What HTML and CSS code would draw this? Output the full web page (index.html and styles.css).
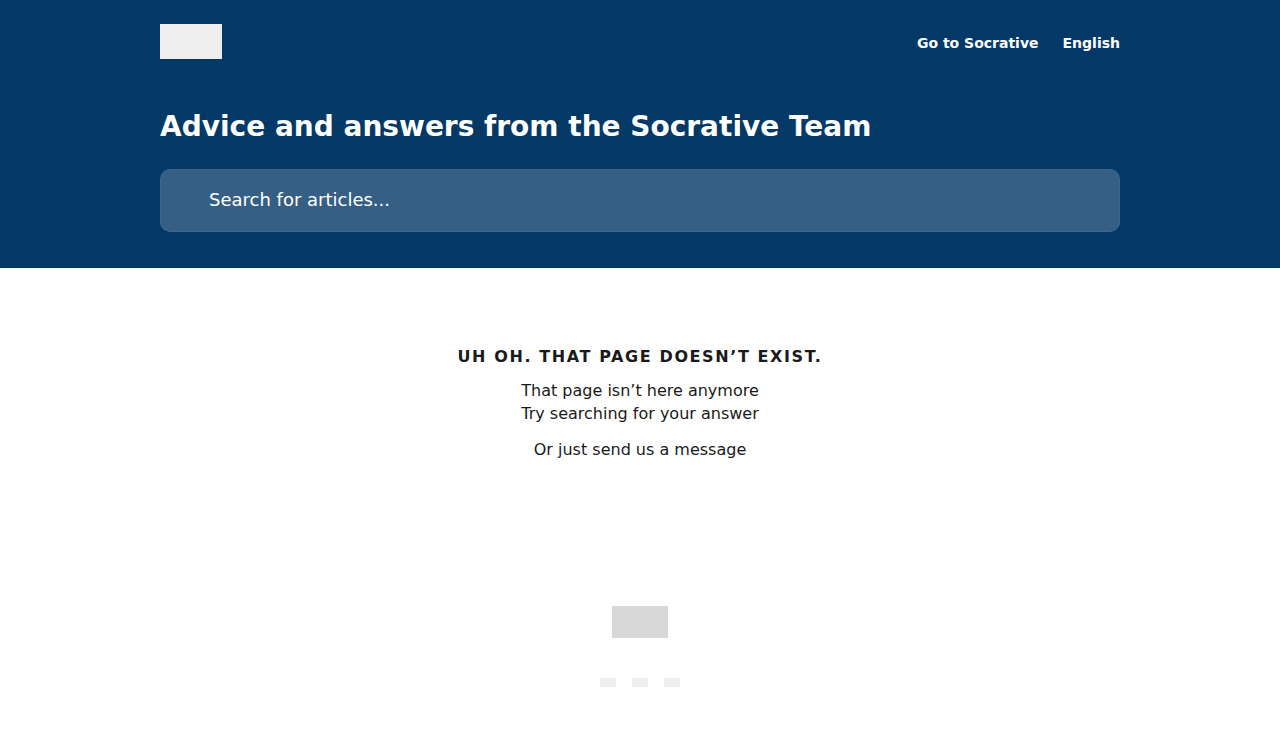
FILE: index.html
```html
<!DOCTYPE html>
<html>
<head>
<meta charset="utf-8">
<link rel="stylesheet" href="styles.css">
</head>
<body>
<header class="header">
  <div class="container">
    <div class="topbar">
      <div class="logo"></div>
      <nav class="nav">
        <a href="#">Go to Socrative</a>
        <a href="#">English</a>
      </nav>
    </div>
    <h1 class="title">Advice and answers from the Socrative Team</h1>
    <div class="search">Search for articles...</div>
  </div>
</header>
<main class="main">
  <h2 class="err-title">UH OH. THAT PAGE DOESN’T EXIST.</h2>
  <p class="lines">That page isn’t here anymore<br>Try searching for your answer</p>
  <p class="msg">Or just send us a message</p>
</main>
<footer class="footer">
  <div class="flogo"></div>
  <div class="socials">
    <span></span><span></span><span></span>
  </div>
</footer>
</body>
</html>
```
FILE: styles.css
```css
* { box-sizing: border-box; }
html, body { margin: 0; padding: 0; }
body {
  font-family: "DejaVu Sans", sans-serif;
  color: #1a1a1a;
  background: #fff;
}
.header {
  background: #033867;
  height: 268px;
}
.container {
  width: 960px;
  margin: 0 auto;
  padding-top: 24px;
}
.topbar {
  display: flex;
  justify-content: space-between;
  align-items: flex-start;
}
.logo {
  width: 62px;
  height: 35px;
  background: #eeeeee;
}
.nav {
  display: flex;
  gap: 24px;
  padding-top: 10px;
}
.nav a {
  color: #fff;
  font-weight: bold;
  font-size: 14px;
  text-decoration: none;
  line-height: 18px;
}
.title {
  margin: 49px 0 0;
  color: #fff;
  font-size: 28px;
  font-weight: bold;
  line-height: 38px;
}
.search {
  margin-top: 23px;
  height: 63px;
  border-radius: 10px;
  background: rgba(255,255,255,0.2);
  box-shadow: inset 0 0 0 1px rgba(255,255,255,0.05);
  color: #fff;
  font-size: 18px;
  line-height: 61px;
  padding-left: 49px;
}
.main {
  text-align: center;
  padding-top: 78px;
  height: 338px;
}
.err-title {
  margin: 0;
  font-size: 16px;
  font-weight: bold;
  letter-spacing: 1.6px;
  line-height: 22px;
}
.lines {
  margin: 11px 0 0;
  font-size: 16px;
  line-height: 23px;
}
.msg {
  margin: 13px 0 0;
  font-size: 16px;
  line-height: 23px;
}
.footer {
  display: flex;
  flex-direction: column;
  align-items: center;
}
.flogo {
  width: 56px;
  height: 32px;
  background: #d8d8d8;
}
.socials {
  display: flex;
  gap: 16px;
  margin-top: 40px;
}
.socials span {
  width: 16px;
  height: 9px;
  background: #eeeeee;
}
```
